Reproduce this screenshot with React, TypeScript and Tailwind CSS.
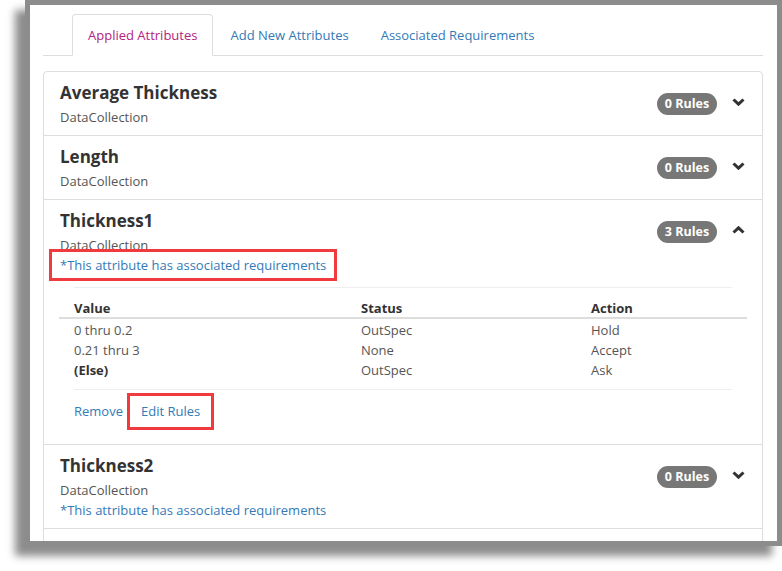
import React from "react";

const blue = "text-[#337ab7]";

function Chevron({ up }: { up?: boolean }) {
  return (
    <svg width="13" height="8" viewBox="0 0 13 8" className="text-[#333]">
      {up ? (
        <polyline points="1.5,6.5 6.5,1.8 11.5,6.5" fill="none" stroke="currentColor" strokeWidth="3" />
      ) : (
        <polyline points="1.5,1.5 6.5,6.2 11.5,1.5" fill="none" stroke="currentColor" strokeWidth="3" />
      )}
    </svg>
  );
}

function Highlight({ children, className }: { children: React.ReactNode; className: string }) {
  return (
    <span className="relative flex">
      {children}
      <span className={`absolute border-[3px] border-[#ef3b3f] pointer-events-none ${className}`} />
    </span>
  );
}

function PanelHeader({
  title,
  rules,
  open,
  note,
  highlightNote,
}: {
  title: string;
  rules: number;
  open?: boolean;
  note?: boolean;
  highlightNote?: boolean;
}) {
  return (
    <div className="flex items-start px-[16px] pt-[10px] pb-[8px]">
      <div className="flex-1">
        <div className="text-[17px] leading-[22px] font-bold text-[#333]">{title}</div>
        <div className="mt-[3px] text-[13px] leading-[20px] text-[#555]">DataCollection</div>
        {note && (
          <div className={`flex text-[13px] leading-[20px] ${blue}`}>
            {highlightNote ? (
              <Highlight className="-left-[11px] -right-[11px] -top-[6px] -bottom-[6px]">
                <span>*This attribute has associated requirements</span>
              </Highlight>
            ) : (
              <span>*This attribute has associated requirements</span>
            )}
          </div>
        )}
      </div>
      <div className="flex items-start mt-[11px]">
        <span className="h-[22px] w-[60px] rounded-full bg-[#777] text-white text-[12.5px] font-bold flex items-center justify-center">
          {rules} Rules
        </span>
        <span className="ml-[15px] mt-[5px] mr-[1px]">
          <Chevron up={open} />
        </span>
      </div>
    </div>
  );
}

export default function App() {
  const rows = [
    { value: "0 thru 0.2", status: "OutSpec", action: "Hold" },
    { value: "0.21 thru 3", status: "None", action: "Accept" },
    { value: "(Else)", status: "OutSpec", action: "Ask", bold: true },
  ];

  return (
    <div className="w-[782px] h-[571px] bg-white overflow-hidden font-['Open_Sans',sans-serif]">
      <div className="ml-[25px] w-[757px] h-[546px] border-[5px] border-[#8c8c8c] bg-white shadow-[-10px_10px_8px_rgba(0,0,0,0.45)] overflow-hidden">
        <div className="pl-[13px] pr-[14px] pt-[9px]">
          {/* Tabs */}
          <div className="flex h-[42px] border-b border-[#ddd] pl-[29px] text-[13px]">
            <div className="h-[42px] -mb-px px-[15px] pt-[2px] flex items-center border border-[#ddd] border-b-white rounded-t-[4px] bg-white text-[#b3237f]">
              Applied Attributes
            </div>
            <div className={`ml-[2px] px-[15px] pt-[2px] flex items-center ${blue}`}>Add New Attributes</div>
            <div className={`ml-[2px] px-[15px] pt-[2px] flex items-center ${blue}`}>Associated Requirements</div>
          </div>

          {/* Panels */}
          <div className="mt-[15px] border border-[#ddd] rounded-[4px]">
            <PanelHeader title="Average Thickness" rules={0} />
            <div className="border-t border-[#ddd]">
              <PanelHeader title="Length" rules={0} />
            </div>
            <div className="border-t border-[#ddd]">
              <PanelHeader title="Thickness1" rules={3} open note highlightNote />
              <div className="pt-[4px] pb-[23px]">
                <div className="mx-[30px] border-t border-[#eee]" />
                <div className="mx-[15px] text-[13px] text-[#555]">
                  <div className="grid grid-cols-[287px_230px_1fr] border-b-2 border-[#ddd] pt-[12px] leading-[17px] font-bold text-[#333]">
                    <div className="px-[15px]">Value</div>
                    <div className="px-[15px]">Status</div>
                    <div className="px-[15px]">Action</div>
                  </div>
                  <div className="pt-[1px]">
                    {rows.map((r) => (
                      <div key={r.value} className="grid grid-cols-[287px_230px_1fr] leading-[20px]">
                        <div className={`px-[15px] ${r.bold ? "font-bold text-[#333]" : ""}`}>{r.value}</div>
                        <div className="px-[15px]">{r.status}</div>
                        <div className="px-[15px]">{r.action}</div>
                      </div>
                    ))}
                  </div>
                </div>
                <div className="mx-[30px] mt-[9px] border-t border-[#eee]" />
                <div className={`mx-[30px] pt-[11px] flex items-center text-[13px] leading-[20px] ${blue}`}>
                  <span>Remove</span>
                  <span className="ml-[18px]">
                    <Highlight className="-left-[14px] -right-[14px] -top-[8px] -bottom-[9px]">
                      <span>Edit Rules</span>
                    </Highlight>
                  </span>
                </div>
              </div>
            </div>
            <div className="border-t border-[#ddd]">
              <PanelHeader title="Thickness2" rules={0} note />
            </div>
            <div className="border-t border-[#ddd] h-[40px]" />
          </div>
        </div>
      </div>
    </div>
  );
}
